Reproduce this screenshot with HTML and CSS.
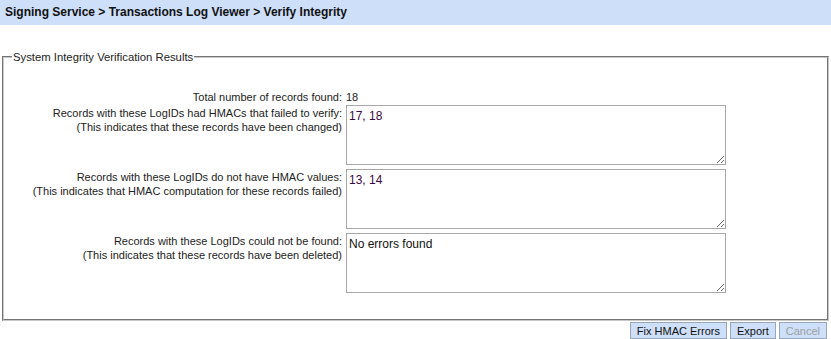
FILE: index.html
```html
<!DOCTYPE html>
<html lang="en">
<head>
  <meta charset="UTF-8">
  <title>Verify Integrity</title>
  <link rel="stylesheet" href="styles.css">
</head>
<body>
  <div class="breadcrumb">Signing Service &gt; Transactions Log Viewer &gt; Verify Integrity</div>

  <fieldset class="results">
    <legend>System Integrity Verification Results</legend>

    <div class="row total">
      <div class="label">Total number of records found:</div>
      <div class="value">18</div>
    </div>

    <div class="row">
      <div class="label">Records with these LogIDs had HMACs that failed to verify:<br>(This indicates that these records have been changed)</div>
      <textarea class="ids" readonly>17, 18</textarea>
    </div>

    <div class="row">
      <div class="label">Records with these LogIDs do not have HMAC values:<br>(This indicates that HMAC computation for these records failed)</div>
      <textarea class="ids" readonly>13, 14</textarea>
    </div>

    <div class="row">
      <div class="label">Records with these LogIDs could not be found:<br>(This indicates that these records have been deleted)</div>
      <textarea class="ids plain" readonly>No errors found</textarea>
    </div>
  </fieldset>

  <div class="actions">
    <button class="button">Fix HMAC Errors</button>
    <button class="button">Export</button>
    <button class="button" disabled>Cancel</button>
  </div>
</body>
</html>
```

FILE: styles.css
```css
body {
  font-family: 'Liberation Sans', Arial, sans-serif;
  font-size: 11px;
  color: #000;
  margin: 0;
  padding: 0;
  background-color: #fff;
}

.breadcrumb {
  background-color: #cddff9;
  height: 25px;
  line-height: 25px;
  padding-left: 5px;
  font-weight: bold;
  font-size: 12px;
  color: #111;
}

.results {
  margin: 26px 2px 0;
  padding: 26px 0 26px;
  border: 2px groove #c8c8c8;
}

.results legend {
  margin-left: 8px;
  padding: 0 1px;
  font-size: 11.3px;
  color: #222;
}

.row {
  display: grid;
  grid-template-columns: 338px 380px;
  column-gap: 4px;
  margin-bottom: 4px;
}

.row.total {
  margin-bottom: 1px;
}

.label {
  text-align: right;
  line-height: 14px;
  padding-top: 1px;
  color: #222;
}

.value {
  line-height: 14px;
  padding-top: 1px;
  color: #222;
}

.ids {
  width: 380px;
  height: 60px;
  box-sizing: border-box;
  margin: 0;
  padding: 3px 2px;
  border: 1px solid #a8a8a8;
  font-family: 'Liberation Sans', Arial, sans-serif;
  font-size: 12px;
  color: #3a0a40;
  resize: both;
}

.ids.plain {
  color: #111;
}

.row:last-child {
  margin-bottom: 0;
}

.actions {
  display: flex;
  justify-content: flex-end;
  gap: 3px;
  padding: 1px 4px 0;
}

.button {
  background-color: #cddff9;
  border: 1px solid #98a6b8;
  border-radius: 0;
  font-family: 'Liberation Sans', Arial, sans-serif;
  font-size: 11px;
  color: #111;
  height: 17px;
  padding: 0 6px;
  cursor: pointer;
}

.button:disabled {
  color: #a0a0a0;
  cursor: default;
}
```
